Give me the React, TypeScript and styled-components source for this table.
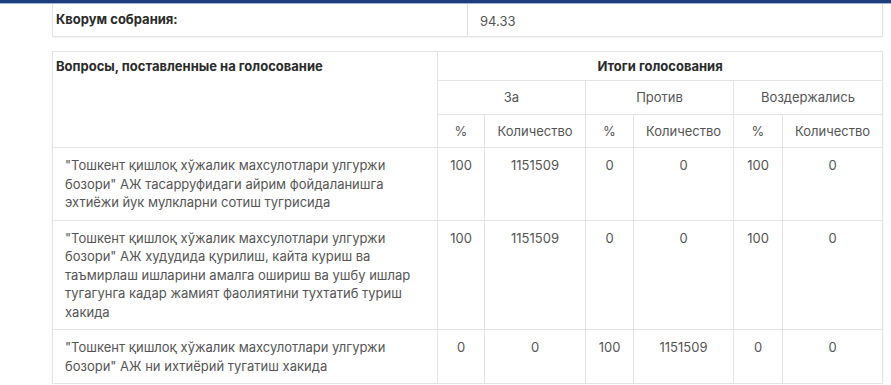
import React from 'react';
import styled, { createGlobalStyle } from 'styled-components';

const GlobalStyle = createGlobalStyle`
  body {
    margin: 0;
    background: #fff;
    font-family: Inter, "Noto Sans", sans-serif;
    font-size: 13px;
    color: #555;
  }
`;

const TopBar = styled.div`
  height: 3px;
  background: #1d3e7b;
  border-bottom: 1px solid #9db8dc;
`;

const Content = styled.div`
  padding: 0 9px 0 52px;
`;

const Table = styled.table<{ $gap?: number }>`
  width: 830px;
  table-layout: fixed;
  border-collapse: collapse;
  margin-top: ${p => p.$gap ?? 0}px;
  box-shadow: 0 1px 2px rgba(0, 0, 0, 0.06);
`;

const Cell = styled.td<{ $bold?: boolean; $center?: boolean; $pad?: string }>`
  border: 1px solid #e4e4e4;
  padding: ${p => p.$pad ?? '8px 12px'};
  line-height: 18.5px;
  vertical-align: top;
  text-align: ${p => (p.$center ? 'center' : 'left')};
  font-weight: ${p => (p.$bold ? 700 : 400)};
  color: ${p => (p.$bold ? '#2b2b2b' : '#555')};
`;

const Head = styled(Cell).attrs({ as: 'th' })``;

const QuorumRow = styled.tr`
  & > td {
    border-top: none;
  }
`;

interface Row {
  text: string;
  values: string[];
}

const rows: Row[] = [
  {
    text: '"Тошкент қишлоқ хўжалик махсулотлари улгуржи бозори" АЖ тасарруфидаги айрим фойдаланишга эхтиёжи йук мулкларни сотиш тугрисида',
    values: ['100', '1151509', '0', '0', '100', '0'],
  },
  {
    text: '"Тошкент қишлоқ хўжалик махсулотлари улгуржи бозори" АЖ худудида қурилиш, кайта куриш ва таъмирлаш ишларини амалга ошириш ва ушбу ишлар тугагунга кадар жамият фаолиятини тухтатиб туриш хакида',
    values: ['100', '1151509', '0', '0', '100', '0'],
  },
  {
    text: '"Тошкент қишлоқ хўжалик махсулотлари улгуржи бозори" АЖ ни ихтиёрий тугатиш хакида',
    values: ['0', '0', '100', '1151509', '0', '0'],
  },
];

const widths = [385, 47, 101, 48, 100, 49, 100];

export default function App() {
  return (
    <>
      <GlobalStyle />
      <TopBar />
      <Content>
        <Table>
          <colgroup>
            <col style={{ width: 415 }} />
            <col style={{ width: 415 }} />
          </colgroup>
          <tbody>
            <QuorumRow>
              <Cell $bold $pad="6px 3px 7px">Кворум собрания:</Cell>
              <Cell $pad="8px 12px 5px">94.33</Cell>
            </QuorumRow>
          </tbody>
        </Table>
        <Table $gap={14}>
          <colgroup>
            {widths.map((w, i) => (
              <col key={i} style={{ width: w }} />
            ))}
          </colgroup>
          <thead>
            <tr>
              <Head $bold rowSpan={3} $pad="5px 3px">
                Вопросы, поставленные на голосование
              </Head>
              <Head $bold $center colSpan={6} $pad="5px 4px">
                Итоги голосования
              </Head>
            </tr>
            <tr>
              <Head $center colSpan={2} $pad="7px 4px">За</Head>
              <Head $center colSpan={2} $pad="7px 4px">Против</Head>
              <Head $center colSpan={2} $pad="7px 4px">Воздержались</Head>
            </tr>
            <tr>
              {[0, 1, 2].map(i => (
                <React.Fragment key={i}>
                  <Head $center $pad="7px 4px">%</Head>
                  <Head $center $pad="7px 4px">Количество</Head>
                </React.Fragment>
              ))}
            </tr>
          </thead>
          <tbody>
            {rows.map((r, i) => (
              <tr key={i}>
                <Cell>{r.text}</Cell>
                {r.values.map((v, j) => (
                  <Cell key={j} $center $pad="8px 4px">
                    {v}
                  </Cell>
                ))}
              </tr>
            ))}
          </tbody>
        </Table>
      </Content>
    </>
  );
}
